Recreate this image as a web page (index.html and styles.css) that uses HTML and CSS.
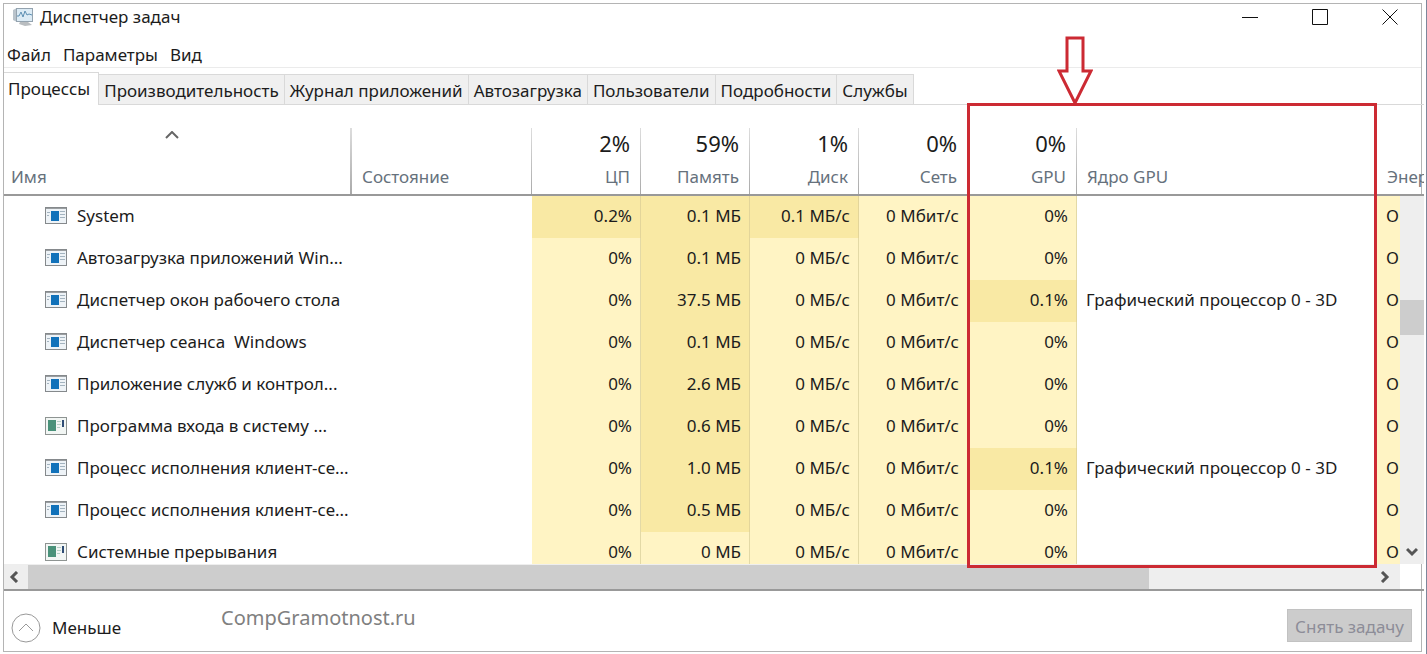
FILE: index.html
```html
<!DOCTYPE html>
<html lang="ru">
<head>
  <meta charset="UTF-8">
  <meta name="viewport" content="width=device-width, initial-scale=1.0">
  <title>Диспетчер задач</title>
  <link rel="stylesheet" href="styles.css">
</head>
<body>
  <div class="window">
    <!-- Заголовок окна -->
    <header class="title-bar">
      <svg class="app-icon" viewBox="0 0 22 20" width="22" height="20">
        <path d="M1 3l4-2v14l-4-2z" fill="#b9c3cb"/>
        <path d="M8 15h8l4 3-7 1-6-2z" fill="#b9bdc0"/>
        <rect x="4" y="1" width="17" height="14" fill="#94a3af"/>
        <rect x="5" y="2" width="15" height="12" fill="#dcebf5"/>
        <path d="M5 9h2l2-4 2 5 2-6 2 4 2-1 3 1" fill="none" stroke="#5d8fb3"/>
      </svg>
      <h1>Диспетчер задач</h1>
      <div class="window-buttons">
        <button aria-label="Свернуть"><svg viewBox="0 0 16 16" width="16" height="16"><path d="M0 8.500h16"/></svg></button>
        <button aria-label="Развернуть"><svg viewBox="0 0 16 16" width="16" height="16"><path d="M.5.5h15v15H.5z"/></svg></button>
        <button aria-label="Закрыть"><svg viewBox="0 0 16 16" width="16" height="16"><path d="M.5.5l15 15M15.500.5l-15 15"/></svg></button>
      </div>
    </header>

    <nav class="menu">
      <button>Файл</button>
      <button>Параметры</button>
      <button>Вид</button>
    </nav>

    <!-- Вкладки -->
    <div class="tabs" role="tablist">
      <button class="tab active" role="tab" aria-selected="true">Процессы</button>
      <button class="tab" role="tab">Производительность</button>
      <button class="tab" role="tab">Журнал приложений</button>
      <button class="tab" role="tab">Автозагрузка</button>
      <button class="tab" role="tab">Пользователи</button>
      <button class="tab" role="tab">Подробности</button>
      <button class="tab" role="tab">Службы</button>
    </div>

    <!-- Список процессов -->
    <main class="processes">
      <div class="list">
        <table>
          <colgroup>
            <col class="col-name">
            <col class="col-state">
            <col class="col-num" span="5">
            <col class="col-core">
            <col class="col-energy">
          </colgroup>
          <thead>
            <tr>
              <th class="text"><svg class="sort" viewBox="0 0 14 8" width="14" height="8"><path d="M1 7l6-6 6 6"/></svg>Имя</th>
              <th class="text">Состояние</th>
              <th><b>2%</b>ЦП</th>
              <th><b>59%</b>Память</th>
              <th><b>1%</b>Диск</th>
              <th><b>0%</b>Сеть</th>
              <th><b>0%</b>GPU</th>
              <th class="text">Ядро GPU</th>
              <th class="text energy">Энер</th>
            </tr>
          </thead>
          <tbody>
            <tr>
              <td><div class="name"><svg class="icon"><use href="#exe"/></svg>System</div></td><td></td>
              <td class="hot">0.2%</td><td class="hot">0.1 МБ</td><td class="hot">0.1 МБ/с</td><td class="heat">0 Мбит/с</td><td class="heat">0%</td>
              <td></td><td class="heat energy">О</td>
            </tr>
            <tr>
              <td><div class="name"><svg class="icon"><use href="#exe"/></svg>Автозагрузка приложений Win...</div></td><td></td>
              <td class="heat">0%</td><td class="hot">0.1 МБ</td><td class="heat">0 МБ/с</td><td class="heat">0 Мбит/с</td><td class="heat">0%</td>
              <td></td><td class="heat energy">О</td>
            </tr>
            <tr>
              <td><div class="name"><svg class="icon"><use href="#exe"/></svg>Диспетчер окон рабочего стола</div></td><td></td>
              <td class="heat">0%</td><td class="hot">37.5 МБ</td><td class="heat">0 МБ/с</td><td class="heat">0 Мбит/с</td><td class="hot">0.1%</td>
              <td class="core">Графический процессор 0 - 3D</td><td class="heat energy">О</td>
            </tr>
            <tr>
              <td><div class="name"><svg class="icon"><use href="#exe"/></svg>Диспетчер сеанса&nbsp; Windows</div></td><td></td>
              <td class="heat">0%</td><td class="hot">0.1 МБ</td><td class="heat">0 МБ/с</td><td class="heat">0 Мбит/с</td><td class="heat">0%</td>
              <td></td><td class="heat energy">О</td>
            </tr>
            <tr>
              <td><div class="name"><svg class="icon"><use href="#exe"/></svg>Приложение служб и контрол...</div></td><td></td>
              <td class="heat">0%</td><td class="hot">2.6 МБ</td><td class="heat">0 МБ/с</td><td class="heat">0 Мбит/с</td><td class="heat">0%</td>
              <td></td><td class="heat energy">О</td>
            </tr>
            <tr>
              <td><div class="name"><svg class="icon"><use href="#sys"/></svg>Программа входа в систему ...</div></td><td></td>
              <td class="heat">0%</td><td class="hot">0.6 МБ</td><td class="heat">0 МБ/с</td><td class="heat">0 Мбит/с</td><td class="heat">0%</td>
              <td></td><td class="heat energy">О</td>
            </tr>
            <tr>
              <td><div class="name"><svg class="icon"><use href="#exe"/></svg>Процесс исполнения клиент-се...</div></td><td></td>
              <td class="heat">0%</td><td class="hot">1.0 МБ</td><td class="heat">0 МБ/с</td><td class="heat">0 Мбит/с</td><td class="hot">0.1%</td>
              <td class="core">Графический процессор 0 - 3D</td><td class="heat energy">О</td>
            </tr>
            <tr>
              <td><div class="name"><svg class="icon"><use href="#exe"/></svg>Процесс исполнения клиент-се...</div></td><td></td>
              <td class="heat">0%</td><td class="hot">0.5 МБ</td><td class="heat">0 МБ/с</td><td class="heat">0 Мбит/с</td><td class="heat">0%</td>
              <td></td><td class="heat energy">О</td>
            </tr>
            <tr>
              <td><div class="name"><svg class="icon"><use href="#sys"/></svg>Системные прерывания</div></td><td></td>
              <td class="heat">0%</td><td class="heat">0 МБ</td><td class="heat">0 МБ/с</td><td class="heat">0 Мбит/с</td><td class="heat">0%</td>
              <td></td><td class="heat energy">О</td>
            </tr>
          </tbody>
        </table>
        <div class="scroll-y">
          <div class="thumb"></div>
          <svg viewBox="0 0 12 10" width="12" height="10"><path d="M1 2l5 5 5-5"/></svg>
        </div>
      </div>
      <div class="scroll-x">
        <svg viewBox="0 0 10 12" width="10" height="12"><path d="M8 1L3 6l5 5"/></svg>
        <div class="track"><div class="thumb"></div></div>
        <svg viewBox="0 0 10 12" width="10" height="12"><path d="M2 1l5 5-5 5"/></svg>
      </div>

      <!-- Выделение столбцов GPU -->
      <div class="highlight">
        <svg viewBox="0 0 36 70" width="36" height="70"><path d="M10 2h16v33h8L18 67 2 35h8z"/></svg>
      </div>
    </main>

    <footer class="bottom">
      <button class="less">
        <svg viewBox="0 0 30 30" width="30" height="30"><circle cx="15" cy="15" r="14"/><path d="M8 18l7-7 7 7"/></svg>
        Меньше
      </button>
      <a class="site" href="#">CompGramotnost.ru</a>
      <button class="end-task" disabled>Снять задачу</button>
    </footer>
  </div>

  <!-- Значки процессов -->
  <svg class="sprite">
    <symbol id="exe" viewBox="0 0 22 18">
      <rect x=".5" y=".5" width="21" height="16" fill="#eef3f7" stroke="#85898c"/>
      <path d="M1 1.500h20" stroke="#9a9ea1"/>
      <rect x="6" y="4" width="8" height="10" fill="#1272ba"/>
      <path d="M2 5.500h3M2 8.500h2M15 4.500h5M15 7.500h5M15 10.500h5" stroke="#a3b3bf"/>
    </symbol>
    <symbol id="sys" viewBox="0 0 22 18">
      <rect x=".5" y=".5" width="21" height="17" fill="#f2f6f4" stroke="#8e9492"/>
      <rect x="3" y="3" width="8" height="11" fill="#4a927a"/>
      <path d="M12 4.500h4M12 7.500h4M12 10.500h3" stroke="#b5cfc6"/>
      <path d="M18 3v7" stroke="#2f4d75" stroke-width="2"/>
    </symbol>
  </svg>
</body>
</html>
```

FILE: styles.css
```css
* {
  margin: 0;
  padding: 0;
  box-sizing: border-box;
}
body {
  font-family: "Noto Sans", "Open Sans", sans-serif;
  font-size: 17px;
  line-height: 24px;
  color: #1c1c1c;
  background: #fff;
  height: 100vh;
  padding: 3px 4px 2px 3px;
  overflow: hidden;
  border-right: 1px solid #7d879b;
}
button {
  font: inherit;
  color: inherit;
  background: none;
  border: none;
}
svg {
  fill: none;
  flex: none;
}
.sprite {
  display: none;
}
.window {
  height: 100%;
  display: flex;
  flex-direction: column;
  border: 1px solid #b4b4b4;
}
/* Заголовок */
.title-bar {
  display: flex;
  align-items: center;
  height: 26px;
  padding: 0 23px 0 8px;
  gap: 6px;
}
.title-bar h1 {
  font-size: 17px;
  font-weight: normal;
}
.window-buttons {
  display: flex;
  gap: 54px;
  margin-left: auto;
}
.window-buttons button {
  display: flex;
}
.window-buttons svg {
  stroke: #111;
}
/* Меню */
.menu {
  display: flex;
  align-items: center;
  gap: 12px;
  height: 38px;
  padding: 12px 3px 0;
  border-bottom: 1px solid #ebebeb;
}
/* Вкладки */
.tabs {
  display: flex;
  align-items: flex-end;
  height: 37px;
  margin-right: -3px;
  border-bottom: 1px solid #d9d9d9;
}
.tab {
  height: 30px;
  padding: 2px 5px 0;
  background: #f0f0f0;
  border: 1px solid #d9d9d9;
  border-left: none;
  border-bottom: none;
}
.tab.active {
  height: 33px;
  padding: 0 8px 0 4px;
  background: #fff;
  margin-bottom: -1px;
}
/* Таблица процессов */
.processes {
  flex: 1;
  min-height: 0;
  display: flex;
  flex-direction: column;
  position: relative;
  margin-right: -3px;
  border-bottom: 2px solid #999;
}
.list {
  flex: 1;
  min-height: 0;
  overflow: hidden;
  position: relative;
}
table {
  width: 100%;
  table-layout: fixed;
  border-collapse: separate;
  border-spacing: 0;
}
.col-state {
  width: 180px;
}
.col-num {
  width: 109px;
}
.col-core {
  width: 300px;
}
.col-energy {
  width: 47px;
}
th {
  height: 91px;
  padding: 0 11px 5px 10px;
  vertical-align: bottom;
  text-align: right;
  font-weight: normal;
  color: #66717c;
  white-space: nowrap;
  border-bottom: 2px solid #999;
  background: linear-gradient(#ddd, #aaa) right bottom / 1px 66px no-repeat;
}
th:first-child {
  padding: 0 19px 5px 7px;
  background-size: 2px 66px;
}
th.text {
  text-align: left;
}
th:nth-child(n+8) {
  background: none;
}
th b {
  display: block;
  font-size: 22px;
  font-weight: normal;
  line-height: 30px;
  margin-bottom: 7px;
  color: #1c1c1c;
}
.sort {
  display: block;
  margin: 0 auto 26px;
  stroke: #666;
  stroke-width: 2;
}
td {
  height: 42px;
  padding: 0 8px 2px 9px;
  text-align: right;
  white-space: nowrap;
}
.name {
  display: flex;
  align-items: center;
  gap: 10px;
  padding-left: 32px;
}
.icon {
  width: 22px;
  height: 18px;
}
.heat {
  background: #fff4c4;
  border-right: 1px solid #e3d9a6;
}
.hot {
  background: #f9e9a4;
  border-right: 1px solid #e3d59a;
}
.core {
  text-align: left;
}
th.energy,
td.energy {
  text-align: left;
  border-right: none;
}
th.energy {
  padding: 0 0 5px 10px;
}
/* Полосы прокрутки */
.scroll-y {
  position: absolute;
  top: 91px;
  right: 0;
  bottom: 0;
  width: 24px;
  display: flex;
  flex-direction: column;
  align-items: center;
  justify-content: space-between;
  padding: 104px 0 7px;
  background: #eee;
}
.scroll-y .thumb {
  width: 100%;
  height: 35px;
  background: #cdcdcd;
}
.scroll-y svg,
.scroll-x svg {
  stroke: #555;
  stroke-width: 3;
}
.scroll-x {
  display: flex;
  align-items: center;
  gap: 9px;
  height: 25px;
  margin-right: 24px;
  padding: 0 10px 0 5px;
  background: #eee;
}
.track {
  flex: 1;
  height: 24px;
}
.track .thumb {
  width: 83.5%;
  height: 100%;
  background: #cdcdcd;
}
/* Красная рамка и стрелка */
.highlight {
  position: absolute;
  top: -2px;
  right: 47px;
  bottom: 21px;
  width: 410px;
  border: 3px solid #cc2a33;
}
.highlight svg {
  position: absolute;
  left: 87px;
  bottom: 100%;
  stroke: #cc2a33;
  stroke-width: 3;
}
/* Нижняя панель */
.bottom {
  display: flex;
  align-items: flex-start;
  height: 60px;
  padding: 18px 9px 0 7px;
}
.less {
  display: flex;
  align-items: center;
  gap: 11px;
  padding-top: 4px;
}
.less svg {
  stroke: #999;
}
.site {
  margin-left: 100px;
  margin-top: -3px;
  font-size: 20px;
  color: #808080;
  text-decoration: none;
}
.end-task {
  margin-left: auto;
  height: 33px;
  padding: 2px 7px 0;
  background: #ccc;
  border: 1px solid #c2c2c2;
  color: #8d8d98;
}
```
